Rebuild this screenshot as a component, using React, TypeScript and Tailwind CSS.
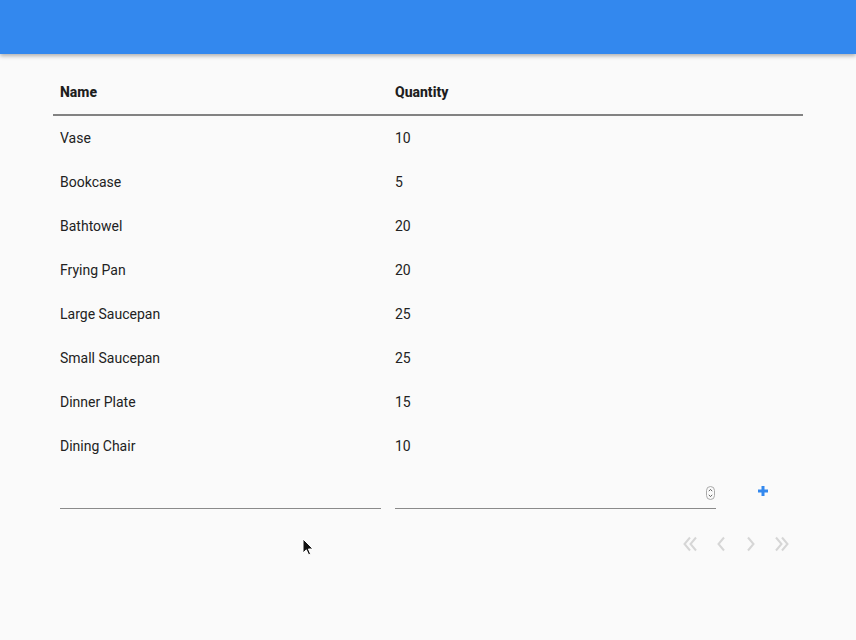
import React from 'react';

const items = [
  { name: 'Vase', qty: 10 },
  { name: 'Bookcase', qty: 5 },
  { name: 'Bathtowel', qty: 20 },
  { name: 'Frying Pan', qty: 20 },
  { name: 'Large Saucepan', qty: 25 },
  { name: 'Small Saucepan', qty: 25 },
  { name: 'Dinner Plate', qty: 15 },
  { name: 'Dining Chair', qty: 10 },
];

const Chevron = ({ d }: { d: string }) => (
  <div className="flex w-[30px] justify-center">
    <svg width="18" height="16" viewBox="0 0 18 16" fill="none" stroke="#d6d6d6" strokeWidth="2">
      <path d={d} />
    </svg>
  </div>
);

export default function App() {
  return (
    <div className="relative min-h-[640px] bg-[#fafafa] font-['Roboto',sans-serif] text-[14px] text-[#222]">
      <div className="h-[54px] bg-[#3388ee] shadow-[0_2px_4px_rgba(0,0,0,0.3)]" />

      <div className="mx-[53px] mt-[16px]">
        <div className="flex h-[46px] items-center border-b-2 border-[#828282] font-extrabold text-[#1e1e1e]">
          <div className="w-[335px] pl-[7px]">Name</div>
          <div className="pl-[7px]">Quantity</div>
        </div>
        {items.map((it) => (
          <div key={it.name} className="flex h-[44px] items-center">
            <div className="w-[335px] pl-[7px]">{it.name}</div>
            <div className="pl-[7px]">{it.qty}</div>
          </div>
        ))}

        <div className="flex h-[41px] items-end">
          <div className="ml-[7px] h-[30px] w-[321px] border-b border-[#8a8a8a]" />
          <div className="ml-[14px] flex h-[30px] w-[321px] items-center justify-end border-b border-[#8a8a8a] pr-[1px]">
            <svg width="9" height="14" viewBox="0 0 9 14" className="mb-[2px]">
              <rect x="0.5" y="0.5" width="8" height="13" rx="4" fill="#fafafa" stroke="#aaa" />
              <path d="M2.8 5.2L4.5 3.4 6.2 5.2M2.8 8.8L4.5 10.6 6.2 8.8" fill="none" stroke="#555" strokeWidth="0.9" />
            </svg>
          </div>
          <div className="ml-[41px] flex h-[30px] w-[12px] items-center pb-[6px]">
            <svg width="12" height="12" viewBox="0 0 12 12">
              <path d="M6 1v10M1 6h10" stroke="#3388ee" strokeWidth="3" />
            </svg>
          </div>
        </div>

        <div className="mt-[27px] flex justify-end pr-[7px]">
          <Chevron d="M8 1.5L2.5 8 8 14.5M14 1.5L8.5 8 14 14.5" />
          <Chevron d="M12 1.5L6.5 8 12 14.5" />
          <Chevron d="M6 1.5L11.5 8 6 14.5" />
          <Chevron d="M4 1.5L9.5 8 4 14.5M10 1.5L15.5 8 10 14.5" />
        </div>
      </div>

      <svg className="absolute left-[302px] top-[538px]" width="12" height="18" viewBox="0 0 12 18">
        <path d="M1 1v14l3.3-3.2 2.3 5 2-0.9-2.2-4.9H11z" fill="#111" stroke="#fff" strokeWidth="1" />
      </svg>
    </div>
  );
}
